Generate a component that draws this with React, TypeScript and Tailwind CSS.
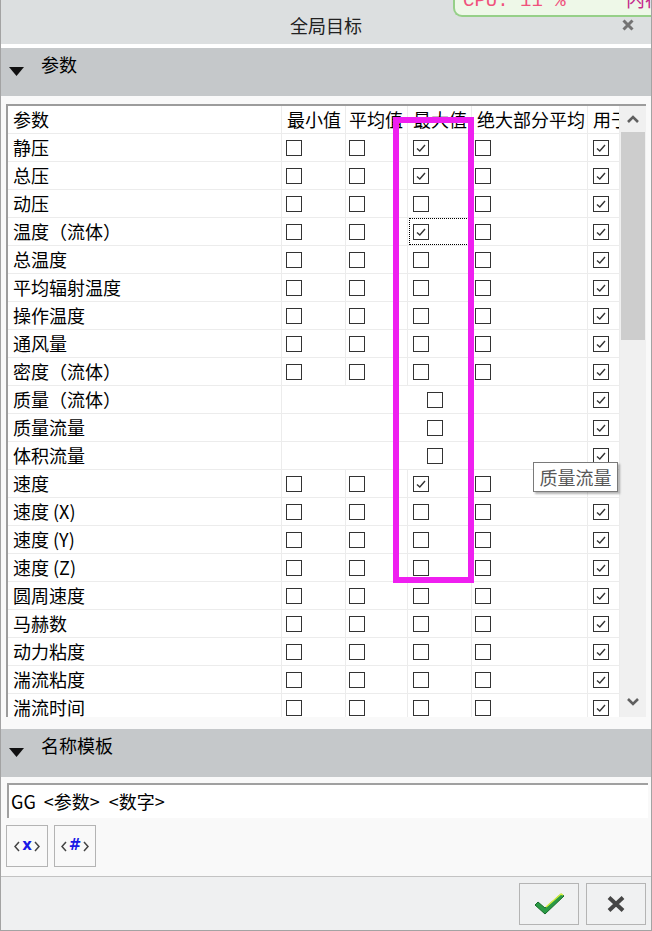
import React from "react";

type Row = { name: string; max?: boolean; merged?: boolean; focus?: boolean };

const rows: Row[] = [
  { name: "静压", max: true },
  { name: "总压", max: true },
  { name: "动压" },
  { name: "温度（流体）", max: true, focus: true },
  { name: "总温度" },
  { name: "平均辐射温度" },
  { name: "操作温度" },
  { name: "通风量" },
  { name: "密度（流体）" },
  { name: "质量（流体）", merged: true },
  { name: "质量流量", merged: true },
  { name: "体积流量", merged: true },
  { name: "速度", max: true },
  { name: "速度 (X)" },
  { name: "速度 (Y)" },
  { name: "速度 (Z)" },
  { name: "圆周速度" },
  { name: "马赫数" },
  { name: "动力粘度" },
  { name: "湍流粘度" },
  { name: "湍流时间" },
];

const CheckBox = ({ checked }: { checked?: boolean }) => (
  <span className="w-[16px] h-[16px] border border-[#333333] bg-white flex items-center justify-center shrink-0">
    {checked && (
      <svg width="12" height="12" viewBox="0 0 12 12">
        <path d="M2 6.5 L4.8 9 L10 3" fill="none" stroke="#333" strokeWidth="1.4" />
      </svg>
    )}
  </span>
);

const Triangle = () => (
  <svg width="15" height="9" viewBox="0 0 15 9" className="shrink-0">
    <polygon points="0,0 15,0 7.5,9" fill="#111" />
  </svg>
);

// small insert-token button: ‹x› / ‹#›
const TokenButton = ({ label }: { label: string }) => (
  <button className="w-[42px] h-[42px] border border-[#b4b4b4] bg-[#f9f9f9] flex items-center justify-center gap-[2px]">
    <svg width="6" height="11" viewBox="0 0 6 11">
      <path d="M5 1 L1 5.5 L5 10" fill="none" stroke="#444" strokeWidth="1.5" />
    </svg>
    <span className="text-[#1a1ae6] font-bold text-[15px] leading-none font-['DejaVu_Sans',sans-serif] -mt-[2px]">
      {label}
    </span>
    <svg width="6" height="11" viewBox="0 0 6 11">
      <path d="M1 1 L5 5.5 L1 10" fill="none" stroke="#444" strokeWidth="1.5" />
    </svg>
  </button>
);

const cell = "h-full border-r border-[#ececec] flex items-center overflow-hidden";

const App = () => {
  return (
    <div className="relative w-[652px] h-[931px] bg-[#f9f9f9] border-x border-b border-[#a3a3a3] flex flex-col font-['Noto_Sans_CJK_SC',sans-serif] text-black overflow-hidden">
      {/* title bar */}
      <div className="h-[44px] shrink-0 bg-[#dcdfe0] flex items-center justify-center relative">
        <span className="text-[18px] text-[#222] mt-[6px]">全局目标</span>
        <svg width="12" height="12" viewBox="0 0 12 12" className="absolute right-[17px] top-[19px]">
          <path d="M1.5 1.5 L10.5 10.5 M10.5 1.5 L1.5 10.5" stroke="#737373" strokeWidth="3" />
        </svg>
      </div>
      <div className="h-[4px] shrink-0 bg-white" />

      {/* section: 参数 */}
      <div className="h-[48px] shrink-0 bg-[#c5c8ca] flex items-start">
        <div className="ml-[8px] mt-[19px]">
          <Triangle />
        </div>
        <span className="ml-[17px] mt-[2px] text-[18px] leading-[28px]">参数</span>
      </div>

      <div className="h-[8px] shrink-0" />

      {/* table */}
      <div className="mx-[5px] h-[613px] shrink-0 border-t-2 border-l-2 border-[#9c9c9c] bg-white flex">
        <div className="w-[612px] overflow-hidden text-[18px]">
          <div className="grid grid-cols-[274px_64px_62px_64px_116px_32px] h-[28px] border-b border-[#ececec]">
            <div className={`${cell} pl-[5px]`}>参数</div>
            <div className={`${cell} pl-[5px] whitespace-nowrap`}>最小值</div>
            <div className={`${cell} pl-[3px] whitespace-nowrap`}>平均值</div>
            <div className={`${cell} pl-[5px] whitespace-nowrap`}>最大值</div>
            <div className={`${cell} pl-[5px] whitespace-nowrap`}>绝大部分平均</div>
            <div className={`${cell} pl-[5px] whitespace-nowrap`}>用于</div>
          </div>
          {rows.map((r) => (
            <div
              key={r.name}
              className="grid grid-cols-[274px_64px_62px_64px_116px_32px] h-[28px] border-b border-[#ececec]"
            >
              <div className={`${cell} pl-[5px] whitespace-nowrap`}>{r.name}</div>
              {r.merged ? (
                <div className={`${cell} col-span-4 justify-center`}>
                  <CheckBox />
                </div>
              ) : (
                <>
                  <div className={`${cell} pl-[4px]`}>
                    <CheckBox />
                  </div>
                  <div className={`${cell} pl-[3px]`}>
                    <CheckBox />
                  </div>
                  <div className={`${cell} pl-[5px] relative`}>
                    <CheckBox checked={r.max} />
                    {r.focus && (
                      <span className="absolute left-[1px] top-0 w-[60px] h-[27px] border border-dotted border-black" />
                    )}
                  </div>
                  <div className={`${cell} pl-[3px]`}>
                    <CheckBox />
                  </div>
                </>
              )}
              <div className={`${cell} pl-[5px]`}>
                <CheckBox checked />
              </div>
            </div>
          ))}
        </div>

        {/* scrollbar */}
        <div className="w-[26px] bg-[#f0f0f0] flex flex-col">
          <div className="h-[26px] flex items-center justify-center">
            <svg width="12" height="8" viewBox="0 0 12 8">
              <path d="M1 7 L6 2 L11 7" fill="none" stroke="#606060" strokeWidth="2.6" />
            </svg>
          </div>
          <div className="mx-[1px] h-[208px] bg-[#cdcdcd]" />
          <div className="flex-1" />
          <div className="h-[26px] flex items-center justify-center mb-[2px]">
            <svg width="12" height="8" viewBox="0 0 12 8">
              <path d="M1 1 L6 6 L11 1" fill="none" stroke="#606060" strokeWidth="2.6" />
            </svg>
          </div>
        </div>
      </div>

      <div className="h-[12px] shrink-0" />

      {/* section: 名称模板 */}
      <div className="h-[48px] shrink-0 bg-[#c5c8ca] flex items-start">
        <div className="ml-[8px] mt-[19px]">
          <Triangle />
        </div>
        <span className="ml-[17px] mt-[2px] text-[18px] leading-[28px]">名称模板</span>
      </div>

      <div className="h-[6px] shrink-0" />

      <div className="ml-[6px] mr-[3px] h-[35px] shrink-0 border-t-2 border-l-2 border-[#a0a0a0] bg-white flex items-center pl-[2px] text-[18px] whitespace-nowrap">
        <span>GG</span>
        <span className="ml-[8px]">{"<参数>"}</span>
        <span className="ml-[9px]">{"<数字>"}</span>
      </div>

      <div className="h-[7px] shrink-0" />

      <div className="flex gap-[6px] ml-[5px] h-[42px] shrink-0">
        <TokenButton label="x" />
        <TokenButton label="#" />
      </div>

      <div className="h-[9px] shrink-0" />

      {/* footer */}
      <div className="flex-1 bg-[#eff0f1] border-t border-[#c3c3c3] flex justify-end items-start gap-[7px] pr-[5px] pt-[6px]">
        <button className="w-[60px] h-[42px] border border-[#b4b4b4] bg-[#f0f1f2] flex items-center justify-center">
          <svg width="32" height="24" viewBox="0 0 32 24">
            <path d="M2 13 L5 10 L12 16 L28 2 L31 4 L12 22 Z" fill="#2a9a45" stroke="#176b2a" strokeWidth="1" />
            <path d="M13 15 L28 2 L30 3" fill="none" stroke="#d8f040" strokeWidth="1.4" />
          </svg>
        </button>
        <button className="w-[60px] h-[42px] border border-[#b4b4b4] bg-[#f0f1f2] flex items-center justify-center">
          <svg width="18" height="16" viewBox="0 0 18 16">
            <path d="M2 1.5 L16 14.5 M16 1.5 L2 14.5" stroke="#464646" strokeWidth="4" />
          </svg>
        </button>
      </div>

      {/* overlay: selection highlight */}
      <div className="absolute left-[392px] top-[117px] w-[81px] h-[466px] border-[6px] border-[#ef1ff0]" />

      {/* tooltip */}
      <div className="absolute left-[532px] top-[462px] w-[85px] h-[30px] bg-white border border-[#7a7a7a] shadow-[2px_2px_2px_rgba(0,0,0,0.3)] flex items-center justify-center text-[18px] text-[#575757]">
        质量流量
      </div>

      {/* cpu badge */}
      <div className="absolute left-[452px] top-0 w-[202px] h-[17px] bg-[#eef8e8] border-l-2 border-b-2 border-[#96d088] rounded-bl-[9px] overflow-hidden">
        <span className="absolute left-[8px] -top-[13px] font-['Liberation_Mono',monospace] text-[19px] text-[#f0527c] whitespace-pre">
          CPU: 11 %
        </span>
        <span className="absolute left-[171px] -top-[15px] text-[19px] text-[#c42a8c] whitespace-pre">
          内存
        </span>
      </div>
    </div>
  );
};

export default App;
